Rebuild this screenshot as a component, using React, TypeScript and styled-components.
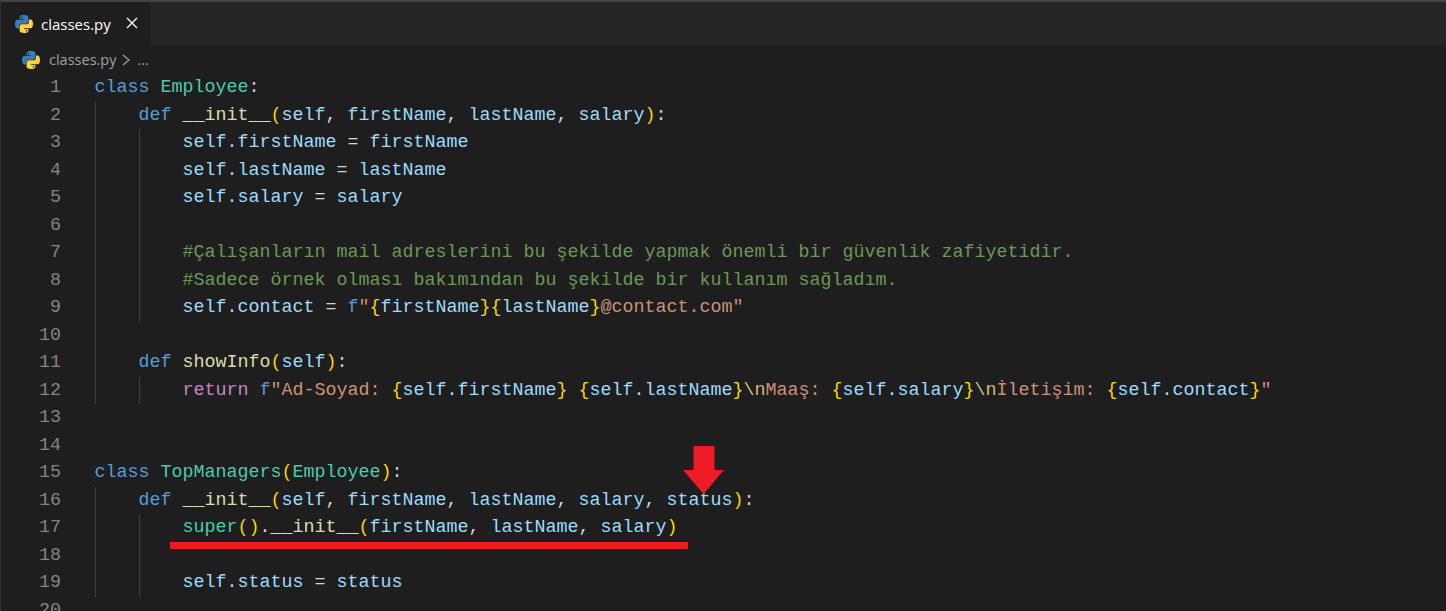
import React from 'react'
import styled, { createGlobalStyle } from 'styled-components'

const colors = {
  kw: '#569cd6',
  cls: '#4ec9b0',
  fn: '#dcdcaa',
  v: '#9cdcfe',
  br: '#ffd700',
  str: '#ce9178',
  com: '#6a9955',
  ctl: '#c586c0',
  op: '#d4d4d4',
  esc: '#d7ba7d',
}

type Kind = keyof typeof colors
type Tok = [Kind, string]

interface Line {
  guides: number
  toks?: Tok[]
}

const lines: Line[] = [
  { guides: 0, toks: [['kw', 'class'], ['op', ' '], ['cls', 'Employee'], ['op', ':']] },
  { guides: 1, toks: [['kw', 'def'], ['op', ' '], ['fn', '__init__'], ['br', '('], ['v', 'self'], ['op', ', '], ['v', 'firstName'], ['op', ', '], ['v', 'lastName'], ['op', ', '], ['v', 'salary'], ['br', ')'], ['op', ':']] },
  { guides: 2, toks: [['v', 'self.firstName'], ['op', ' = '], ['v', 'firstName']] },
  { guides: 2, toks: [['v', 'self.lastName'], ['op', ' = '], ['v', 'lastName']] },
  { guides: 2, toks: [['v', 'self.salary'], ['op', ' = '], ['v', 'salary']] },
  { guides: 2 },
  { guides: 2, toks: [['com', '#Çalışanların mail adreslerini bu şekilde yapmak önemli bir güvenlik zafiyetidir.']] },
  { guides: 2, toks: [['com', '#Sadece örnek olması bakımından bu şekilde bir kullanım sağladım.']] },
  { guides: 2, toks: [['v', 'self.contact'], ['op', ' = '], ['kw', 'f'], ['str', '"'], ['br', '{'], ['v', 'firstName'], ['br', '}{'], ['v', 'lastName'], ['br', '}'], ['str', '@contact.com"']] },
  { guides: 1 },
  { guides: 1, toks: [['kw', 'def'], ['op', ' '], ['fn', 'showInfo'], ['br', '('], ['v', 'self'], ['br', ')'], ['op', ':']] },
  { guides: 2, toks: [['ctl', 'return'], ['op', ' '], ['kw', 'f'], ['str', '"Ad-Soyad: '], ['br', '{'], ['v', 'self.firstName'], ['br', '}'], ['str', ' '], ['br', '{'], ['v', 'self.lastName'], ['br', '}'], ['esc', '\\n'], ['str', 'Maaş: '], ['br', '{'], ['v', 'self.salary'], ['br', '}'], ['esc', '\\n'], ['str', 'İletişim: '], ['br', '{'], ['v', 'self.contact'], ['br', '}'], ['str', '"']] },
  { guides: 0 },
  { guides: 0 },
  { guides: 0, toks: [['kw', 'class'], ['op', ' '], ['cls', 'TopManagers'], ['br', '('], ['cls', 'Employee'], ['br', ')'], ['op', ':']] },
  { guides: 1, toks: [['kw', 'def'], ['op', ' '], ['fn', '__init__'], ['br', '('], ['v', 'self'], ['op', ', '], ['v', 'firstName'], ['op', ', '], ['v', 'lastName'], ['op', ', '], ['v', 'salary'], ['op', ', '], ['v', 'status'], ['br', ')'], ['op', ':']] },
  { guides: 2, toks: [['cls', 'super'], ['br', '()'], ['op', '.'], ['fn', '__init__'], ['br', '('], ['v', 'firstName'], ['op', ', '], ['v', 'lastName'], ['op', ', '], ['v', 'salary'], ['br', ')']] },
  { guides: 2 },
  { guides: 2, toks: [['v', 'self.status'], ['op', ' = '], ['v', 'status']] },
  { guides: 0 },
]

const GlobalStyle = createGlobalStyle`
  html, body {
    margin: 0;
    padding: 0;
    background: #1e1e1e;
    overflow: hidden;
  }
`

const Window = styled.div`
  position: relative;
  width: 1446px;
  height: 611px;
  overflow: hidden;
  background: #1e1e1e;
  border-top: 2px solid #444444;
  border-left: 1px solid #2e2e2e;
  box-sizing: border-box;
`

const TabBar = styled.div`
  display: flex;
  height: 43px;
  background: #252526;
`

const Tab = styled.div`
  display: flex;
  align-items: center;
  width: 149px;
  padding-left: 14px;
  box-sizing: border-box;
  background: #1e1e1e;
  color: #ffffff;
  font-family: 'Open Sans', sans-serif;
  font-size: 15px;
`

const TabName = styled.span`
  margin-left: 8px;
`

const Close = styled.svg`
  width: 12px;
  height: 12px;
  margin-left: 15px;
  margin-top: -2px;
`

const Crumbs = styled.div`
  display: flex;
  align-items: center;
  height: 29px;
  padding-left: 21px;
  color: #a0a0a0;
  font-family: 'Open Sans', sans-serif;
  font-size: 14.5px;
`

const CrumbName = styled.span`
  margin-left: 9px;
`

const Chevron = styled.svg`
  width: 10px;
  height: 14px;
  margin-left: 5px;
`

const Dots = styled.span`
  margin-left: 6px;
`

const Code = styled.div`
  font-family: 'Liberation Mono', monospace;
  font-size: 18.34px;
  white-space: pre;
`

const Row = styled.div`
  display: flex;
  height: 27.5px;
  line-height: 27.5px;
`

const LineNo = styled.span`
  width: 60px;
  text-align: right;
  color: #858585;
`

const Text = styled.div`
  display: flex;
  margin-left: 33.5px;
`

const Guide = styled.span`
  width: 44px;
  border-left: 1px solid #404040;
  box-sizing: border-box;
`

const Tok = styled.span<{ $kind: Kind }>`
  color: ${props => colors[props.$kind]};
`

const Underline = styled.div`
  position: absolute;
  left: 169px;
  top: 540px;
  width: 518px;
  height: 7px;
  background: #ed1c24;
`

const Arrow = styled.svg`
  position: absolute;
  left: 682px;
  top: 444px;
  width: 41px;
  height: 48px;
`

function PythonIcon({ size }: { size: number }) {
  return (
    <svg width={size} height={size} viewBox="2 2 28 28">
      <path d="M15.885 2.1c-7.1 0-6.651 3.07-6.651 3.07v3.19h6.752v1H6.545S2 8.8 2 16.005s4.013 6.912 4.013 6.912H8.33v-3.361s-.13-4.013 3.9-4.013h6.762s3.772.06 3.772-3.652V5.8s.572-3.712-6.842-3.712Zm-3.732 2.137a1.214 1.214 0 1 1-1.183 1.244v-.02a1.214 1.214 0 0 1 1.214-1.214Z" fill="#387eb8" />
      <path d="M16.085 29.91c7.1 0 6.651-3.08 6.651-3.08v-3.18h-6.751v-1h9.47S30 23.158 30 15.995s-4.013-6.912-4.013-6.912H23.64V12.4s.13 4.013-3.9 4.013h-6.765S9.2 16.356 9.2 20.068V26.2s-.572 3.712 6.842 3.712h.04Zm3.732-2.147A1.214 1.214 0 1 1 21 26.519v.03a1.214 1.214 0 0 1-1.214 1.214h.03Z" fill="#ffd43b" />
    </svg>
  )
}

export default function App() {
  return (
    <Window>
      <GlobalStyle />
      <TabBar>
        <Tab>
          <PythonIcon size={18} />
          <TabName>classes.py</TabName>
          <Close viewBox="0 0 12 12">
            <path d="M1 1L11 11M11 1L1 11" stroke="#ffffff" strokeWidth="1.3" />
          </Close>
        </Tab>
      </TabBar>
      <Crumbs>
        <PythonIcon size={18} />
        <CrumbName>classes.py</CrumbName>
        <Chevron viewBox="0 0 10 14">
          <path d="M2 2L8 7L2 12" stroke="#a0a0a0" strokeWidth="1.2" fill="none" />
        </Chevron>
        <Dots>...</Dots>
      </Crumbs>
      <Code>
        {lines.map((line, i) => (
          <Row key={i}>
            <LineNo>{i + 1}</LineNo>
            <Text>
              {Array.from({ length: line.guides }).map((_, g) => (
                <Guide key={g} />
              ))}
              <span>
                {line.toks?.map((t, j) => (
                  <Tok key={j} $kind={t[0]}>{t[1]}</Tok>
                ))}
              </span>
            </Text>
          </Row>
        ))}
      </Code>
      <Underline />
      <Arrow viewBox="0 0 41 48">
        <polygon points="10.5,0 31.5,0 31.5,24 41,24 20.5,48 0,24 10.5,24" fill="#ed1c24" />
      </Arrow>
    </Window>
  )
}
